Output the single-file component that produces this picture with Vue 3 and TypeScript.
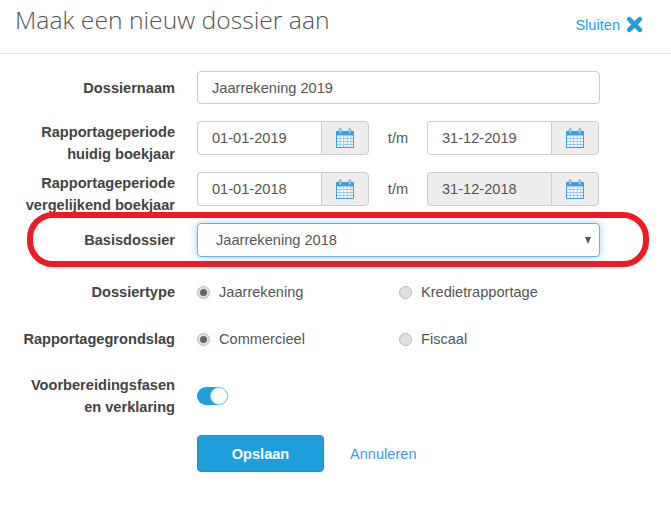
<script setup lang="ts">
import { ref } from 'vue'

const naam = ref('Jaarrekening 2019')
const basis = ref('Jaarrekening 2018')

const periodes = [
  { id: 'huidig', label: ['Rapportageperiode', 'huidig boekjaar'], van: '01-01-2019', tot: '31-12-2019', locked: false },
  { id: 'vergelijk', label: ['Rapportageperiode', 'vergelijkend boekjaar'], van: '01-01-2018', tot: '31-12-2018', locked: true },
]

const radioRows = [
  { label: 'Dossiertype', opties: ['Jaarrekening', 'Kredietrapportage'] },
  { label: 'Rapportagegrondslag', opties: ['Commercieel', 'Fiscaal'] },
]

const cells = [0, 1, 2, 3]
</script>

<template>
  <div class="dialog">
    <header class="head">
      <h1 class="title">Maak een nieuw dossier aan</h1>
      <a class="close">
        Sluiten
        <svg width="17" height="17" viewBox="0 0 17 17" class="close-x">
          <path d="M3.2 3.2 13.8 13.8M13.8 3.2 3.2 13.8" stroke="#1e9fdb" stroke-width="4.6" stroke-linecap="round" fill="none" />
        </svg>
      </a>
    </header>

    <form class="form" @submit.prevent>
      <div class="row row-name">
        <label class="lbl">Dossiernaam</label>
        <input v-model="naam" class="input" />
      </div>

      <div v-for="p in periodes" :key="p.id" class="row row-date">
        <label class="lbl lbl-two lbl-low">{{ p.label[0] }}<br />{{ p.label[1] }}</label>
        <div class="dates">
          <div class="date">
            <input class="date-input" :value="p.van" />
            <span class="addon">
              <svg width="18" height="20" viewBox="0 0 18 20">
                <rect x="0.5" y="3.5" width="17" height="16" fill="#fff" stroke="#3a9fdc" />
                <rect x="0" y="3" width="18" height="4.5" fill="#3a9fdc" />
                <rect x="3.2" y="0.6" width="2" height="5.4" rx="1" fill="#eee" stroke="#3a9fdc" stroke-width="0.9" />
                <rect x="12.8" y="0.6" width="2" height="5.4" rx="1" fill="#eee" stroke="#3a9fdc" stroke-width="0.9" />
                <path v-for="i in cells" :key="i" :d="`M${3.6 * (i + 1) + 0.5} 7.5V19M1 ${10.5 + i * 3 - (i === 3 ? 3 : 0)}H17`" stroke="#9ccbea" stroke-width="1" fill="none" />
              </svg>
            </span>
          </div>
          <span class="tm">t/m</span>
          <div class="date">
            <input class="date-input" :class="{ locked: p.locked }" :value="p.tot" :disabled="p.locked" />
            <span class="addon">
              <svg width="18" height="20" viewBox="0 0 18 20">
                <rect x="0.5" y="3.5" width="17" height="16" fill="#fff" stroke="#3a9fdc" />
                <rect x="0" y="3" width="18" height="4.5" fill="#3a9fdc" />
                <rect x="3.2" y="0.6" width="2" height="5.4" rx="1" fill="#eee" stroke="#3a9fdc" stroke-width="0.9" />
                <rect x="12.8" y="0.6" width="2" height="5.4" rx="1" fill="#eee" stroke="#3a9fdc" stroke-width="0.9" />
                <path v-for="i in cells" :key="i" :d="`M${3.6 * (i + 1) + 0.5} 7.5V19M1 ${10.5 + i * 3 - (i === 3 ? 3 : 0)}H17`" stroke="#9ccbea" stroke-width="1" fill="none" />
              </svg>
            </span>
          </div>
        </div>
      </div>

      <div class="row row-select">
        <label class="lbl">Basisdossier</label>
        <div class="select-wrap">
          <select v-model="basis" class="select">
            <option>Jaarrekening 2018</option>
          </select>
          <span class="caret"></span>
        </div>
      </div>

      <div v-for="(r, n) in radioRows" :key="r.label" class="row row-radio" :class="{ 'row-radio-first': n === 0 }">
        <label class="lbl">{{ r.label }}</label>
        <div class="radios">
          <span v-for="(o, i) in r.opties" :key="o" class="radio">
            <span class="dot" :class="{ on: i === 0 }"></span>
            {{ o }}
          </span>
        </div>
      </div>

      <div class="row row-toggle">
        <label class="lbl lbl-two">Voorbereidingsfasen<br />en verklaring</label>
        <span class="toggle"><span class="knob"></span></span>
      </div>

      <div class="row row-actions">
        <span class="lbl"></span>
        <div class="actions">
          <button class="save" type="submit">Opslaan</button>
          <a class="cancel">Annuleren</a>
        </div>
      </div>
    </form>

    <div class="highlight"></div>
  </div>
</template>

<style>
html,
body {
  margin: 0;
  background: #fff;
}
</style>

<style scoped>
.dialog {
  position: relative;
  width: 671px;
  height: 505px;
  overflow: hidden;
  background: #fff;
  font-family: 'Liberation Sans', Arial, sans-serif;
  font-size: 14.6px;
  color: #444;
}
.head {
  display: flex;
  justify-content: space-between;
  height: 53px;
  padding: 0 28px 0 15px;
  border-bottom: 1px solid #e5e5e5;
}
.title {
  margin: 3px 0 0;
  font-family: 'Open Sans', sans-serif;
  font-size: 24.7px;
  font-weight: 300;
  line-height: 34px;
  color: #555;
}
.close {
  display: flex;
  align-items: center;
  gap: 6px;
  height: 17px;
  margin-top: 16px;
  color: #1e9fdb;
}
.form {
  display: flex;
  flex-direction: column;
  padding-top: 17px;
}
.row {
  display: flex;
  align-items: center;
}
.row-name {
  height: 33px;
}
.row-date {
  height: 34px;
  margin-top: 17px;
}
.row-select {
  height: 34px;
  margin-top: 17px;
}
.row-radio {
  height: 30px;
  margin-top: 17px;
}
.row-radio-first {
  margin-top: 20px;
}
.row-toggle {
  height: 44px;
  margin-top: 20px;
}
.row-actions {
  margin-top: 17px;
}
.lbl {
  flex: none;
  width: 175px;
  margin-right: 22px;
  font-weight: 700;
  text-align: right;
  color: #444;
}
.lbl-two {
  line-height: 22px;
}
.lbl-low {
  margin-top: 10px;
}
.input,
.date-input,
.select {
  box-sizing: border-box;
  font-family: inherit;
  font-size: 14.6px;
  color: #555;
  background: #fff;
  border: 1px solid #ccc;
  border-radius: 4px;
  outline: none;
}
.input {
  width: 403px;
  height: 33px;
  padding: 0 14px;
}
.dates {
  display: flex;
  align-items: center;
}
.date {
  display: flex;
  width: 172px;
}
.date-input {
  flex: 1;
  min-width: 0;
  height: 34px;
  padding: 0 14px;
  border-right: 0;
  border-radius: 4px 0 0 4px;
}
.locked {
  background: #eee;
  opacity: 1;
}
.addon {
  display: flex;
  align-items: center;
  justify-content: center;
  box-sizing: border-box;
  width: 48px;
  height: 34px;
  background: #eee;
  border: 1px solid #ccc;
  border-radius: 0 4px 4px 0;
}
.tm {
  width: 58px;
  text-align: center;
  color: #555;
}
.select-wrap {
  position: relative;
  width: 403px;
}
.select {
  display: block;
  width: 100%;
  height: 34px;
  padding: 0 18px;
  appearance: none;
  border-color: #66afe9;
  box-shadow: 0 0 8px rgba(102, 175, 233, 0.6);
}
.caret {
  position: absolute;
  top: 14px;
  right: 9px;
  border-top: 7px solid #555;
  border-left: 3.5px solid transparent;
  border-right: 3.5px solid transparent;
}
.radios {
  display: grid;
  grid-template-columns: 202px 1fr;
}
.radio {
  display: flex;
  align-items: center;
  gap: 9px;
  color: #555;
}
.dot {
  position: relative;
  box-sizing: border-box;
  width: 13px;
  height: 13px;
  border-radius: 50%;
  background: #e0e0e0;
  border: 1px solid #b8b8b8;
}
.dot.on::after {
  content: '';
  position: absolute;
  inset: 2px;
  border-radius: 50%;
  background: #666;
}
.toggle {
  display: flex;
  justify-content: flex-end;
  box-sizing: border-box;
  width: 31px;
  height: 18px;
  border-radius: 9px;
  background: #1e9fdb;
}
.knob {
  box-sizing: border-box;
  width: 18px;
  height: 18px;
  border-radius: 50%;
  background: #fff;
  border: 1px solid #8fd0ef;
}
.actions {
  display: flex;
  align-items: center;
  gap: 26px;
}
.save {
  width: 127px;
  height: 37px;
  font-family: inherit;
  font-size: 14.6px;
  font-weight: 700;
  color: #fff;
  background: #1e9fdb;
  border: 1px solid #1c93cb;
  border-radius: 4px;
}
.cancel {
  color: #3a9fdc;
}
.highlight {
  position: absolute;
  left: 27px;
  top: 212px;
  box-sizing: border-box;
  width: 622px;
  height: 55px;
  border: 6px solid #ed1c24;
  border-radius: 26px;
  pointer-events: none;
}
</style>
